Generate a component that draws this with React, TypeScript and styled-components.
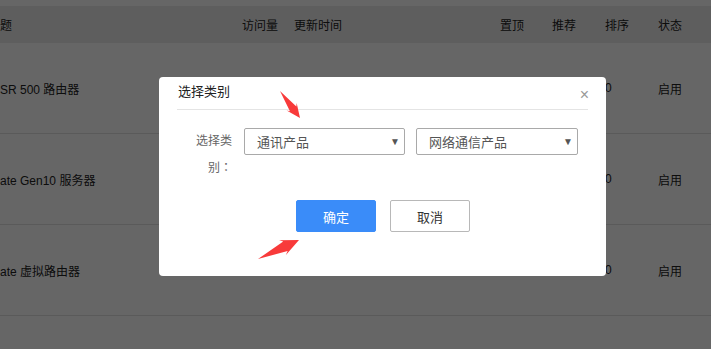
import * as React from "react";
import styled, { createGlobalStyle } from "styled-components";

const Global = createGlobalStyle`
    html, body {
        margin: 0;
        padding: 0;
        background: #ffffff;
        overflow: hidden;
    }
    body {
        font-family: "Liberation Sans", "Noto Sans CJK SC", sans-serif;
        font-size: 12px;
        color: #222;
    }
`;

const Page = styled.div`
    width: 711px;
    height: 349px;
    padding-top: 6px;
    box-sizing: border-box;
    background: #ffffff;
`;

const Row = styled.div<{ head?: boolean }>`
    display: grid;
    grid-template-columns: 242px 52px 206px 52px 53px 53px 1fr;
    align-items: center;
    height: ${props => (props.head ? "36px" : "90px")};
    background: ${props => (props.head ? "#ececec" : "#ffffff")};
    border-bottom: 1px solid ${props => (props.head ? "#ececec" : "#e2e2e2")};
    white-space: nowrap;
`;

const Cell = styled.div`
    overflow: hidden;
    font-size: 12px;
    color: #222;
`;

const Overlay = styled.div`
    position: fixed;
    inset: 0;
    background: rgba(0, 0, 0, 0.6);
`;

const Modal = styled.div`
    position: fixed;
    left: 159px;
    top: 77px;
    width: 447px;
    height: 199px;
    background: #ffffff;
    border-radius: 4px;
    display: flex;
    flex-direction: column;
`;

const TitleBar = styled.div`
    margin: 0 18px;
    height: 32px;
    padding-left: 1px;
    display: flex;
    justify-content: space-between;
    align-items: center;
    border-bottom: 1px solid #e4e4e4;
`;

const Title = styled.span`
    font-size: 13px;
    line-height: 20px;
    color: #222;
    margin-top: -2px;
`;

const Close = styled.span`
    font-size: 16px;
    line-height: 20px;
    color: #999;
    margin-top: 3px;
    margin-right: -1px;
`;

const FormRow = styled.div`
    display: flex;
    align-items: flex-start;
    gap: 12px;
    margin-top: 18px;
    padding-left: 21px;
`;

const Label = styled.div`
    width: 52px;
    text-align: right;
    font-family: "Liberation Sans", "Noto Sans CJK TC", sans-serif;
    font-size: 12px;
    line-height: 27px;
    color: #666;
`;

const Selects = styled.div`
    display: flex;
    gap: 11px;
`;

const Select = styled.div<{ w: number }>`
    width: ${props => props.w}px;
    height: 27px;
    box-sizing: border-box;
    border: 1px solid #a9a9a9;
    border-radius: 2px;
    padding: 0 4px 0 12px;
    display: flex;
    align-items: center;
    justify-content: space-between;
    font-size: 13px;
    color: #555;
`;

const Caret = styled.span`
    font-size: 10px;
    color: #555;
`;

const Buttons = styled.div`
    display: flex;
    justify-content: center;
    gap: 14px;
    margin-top: 18px;
    padding-left: 1px;
`;

const Button = styled.div<{ primary?: boolean }>`
    width: 80px;
    height: 32px;
    box-sizing: border-box;
    border-radius: 2px;
    display: flex;
    align-items: center;
    justify-content: center;
    font-size: 13px;
    background: ${props => (props.primary ? "#3a8cf9" : "#ffffff")};
    color: ${props => (props.primary ? "#ffffff" : "#333")};
    border: 1px solid ${props => (props.primary ? "#3a8cf9" : "#b8b8b8")};
`;

const Marks = styled.svg`
    position: fixed;
    left: 0;
    top: 0;
    pointer-events: none;
`;

type ArrowProps = { x1: number; y1: number; x2: number; y2: number; head: number };

function Arrow({ x1, y1, x2, y2, head }: ArrowProps) {
    const len = Math.hypot(x2 - x1, y2 - y1);
    const deg = (Math.atan2(y2 - y1, x2 - x1) * 180) / Math.PI;
    const b = head * 0.4;
    const pts = [
        [0, 0],
        [len - head * 1.15, -b],
        [len - head * 1.4, -head * 0.62],
        [len, 0],
        [len - head * 1.4, head * 0.62],
        [len - head * 1.15, b],
    ]
        .map(p => p.join(","))
        .join(" ");
    return <polygon points={pts} fill="#f83a3a" transform={`translate(${x1} ${y1}) rotate(${deg})`} />;
}

const rows = [
    { title: "SR 500 路由器" },
    { title: "ate Gen10 服务器" },
    { title: "ate 虚拟路由器" },
];

export default function App() {
    return (
        <>
            <Global />
            <Page>
                <Row head>
                    <Cell>题</Cell>
                    <Cell>访问量</Cell>
                    <Cell>更新时间</Cell>
                    <Cell>置顶</Cell>
                    <Cell>推荐</Cell>
                    <Cell>排序</Cell>
                    <Cell>状态</Cell>
                </Row>
                {rows.map(r => (
                    <Row key={r.title}>
                        <Cell>{r.title}</Cell>
                        <Cell />
                        <Cell />
                        <Cell />
                        <Cell />
                        <Cell>0</Cell>
                        <Cell>启用</Cell>
                    </Row>
                ))}
            </Page>
            <Overlay />
            <Modal>
                <TitleBar>
                    <Title>选择类别</Title>
                    <Close>×</Close>
                </TitleBar>
                <FormRow>
                    <Label>选择类别：</Label>
                    <Selects>
                        <Select w={161}>
                            通讯产品<Caret>▼</Caret>
                        </Select>
                        <Select w={162}>
                            网络通信产品<Caret>▼</Caret>
                        </Select>
                    </Selects>
                </FormRow>
                <Buttons>
                    <Button primary>确定</Button>
                    <Button>取消</Button>
                </Buttons>
            </Modal>
            <Marks width="711" height="349">
                <Arrow x1={280} y1={91} x2={300} y2={118} head={10} />
                <Arrow x1={258} y1={259} x2={299} y2={240} head={13} />
            </Marks>
        </>
    );
}
